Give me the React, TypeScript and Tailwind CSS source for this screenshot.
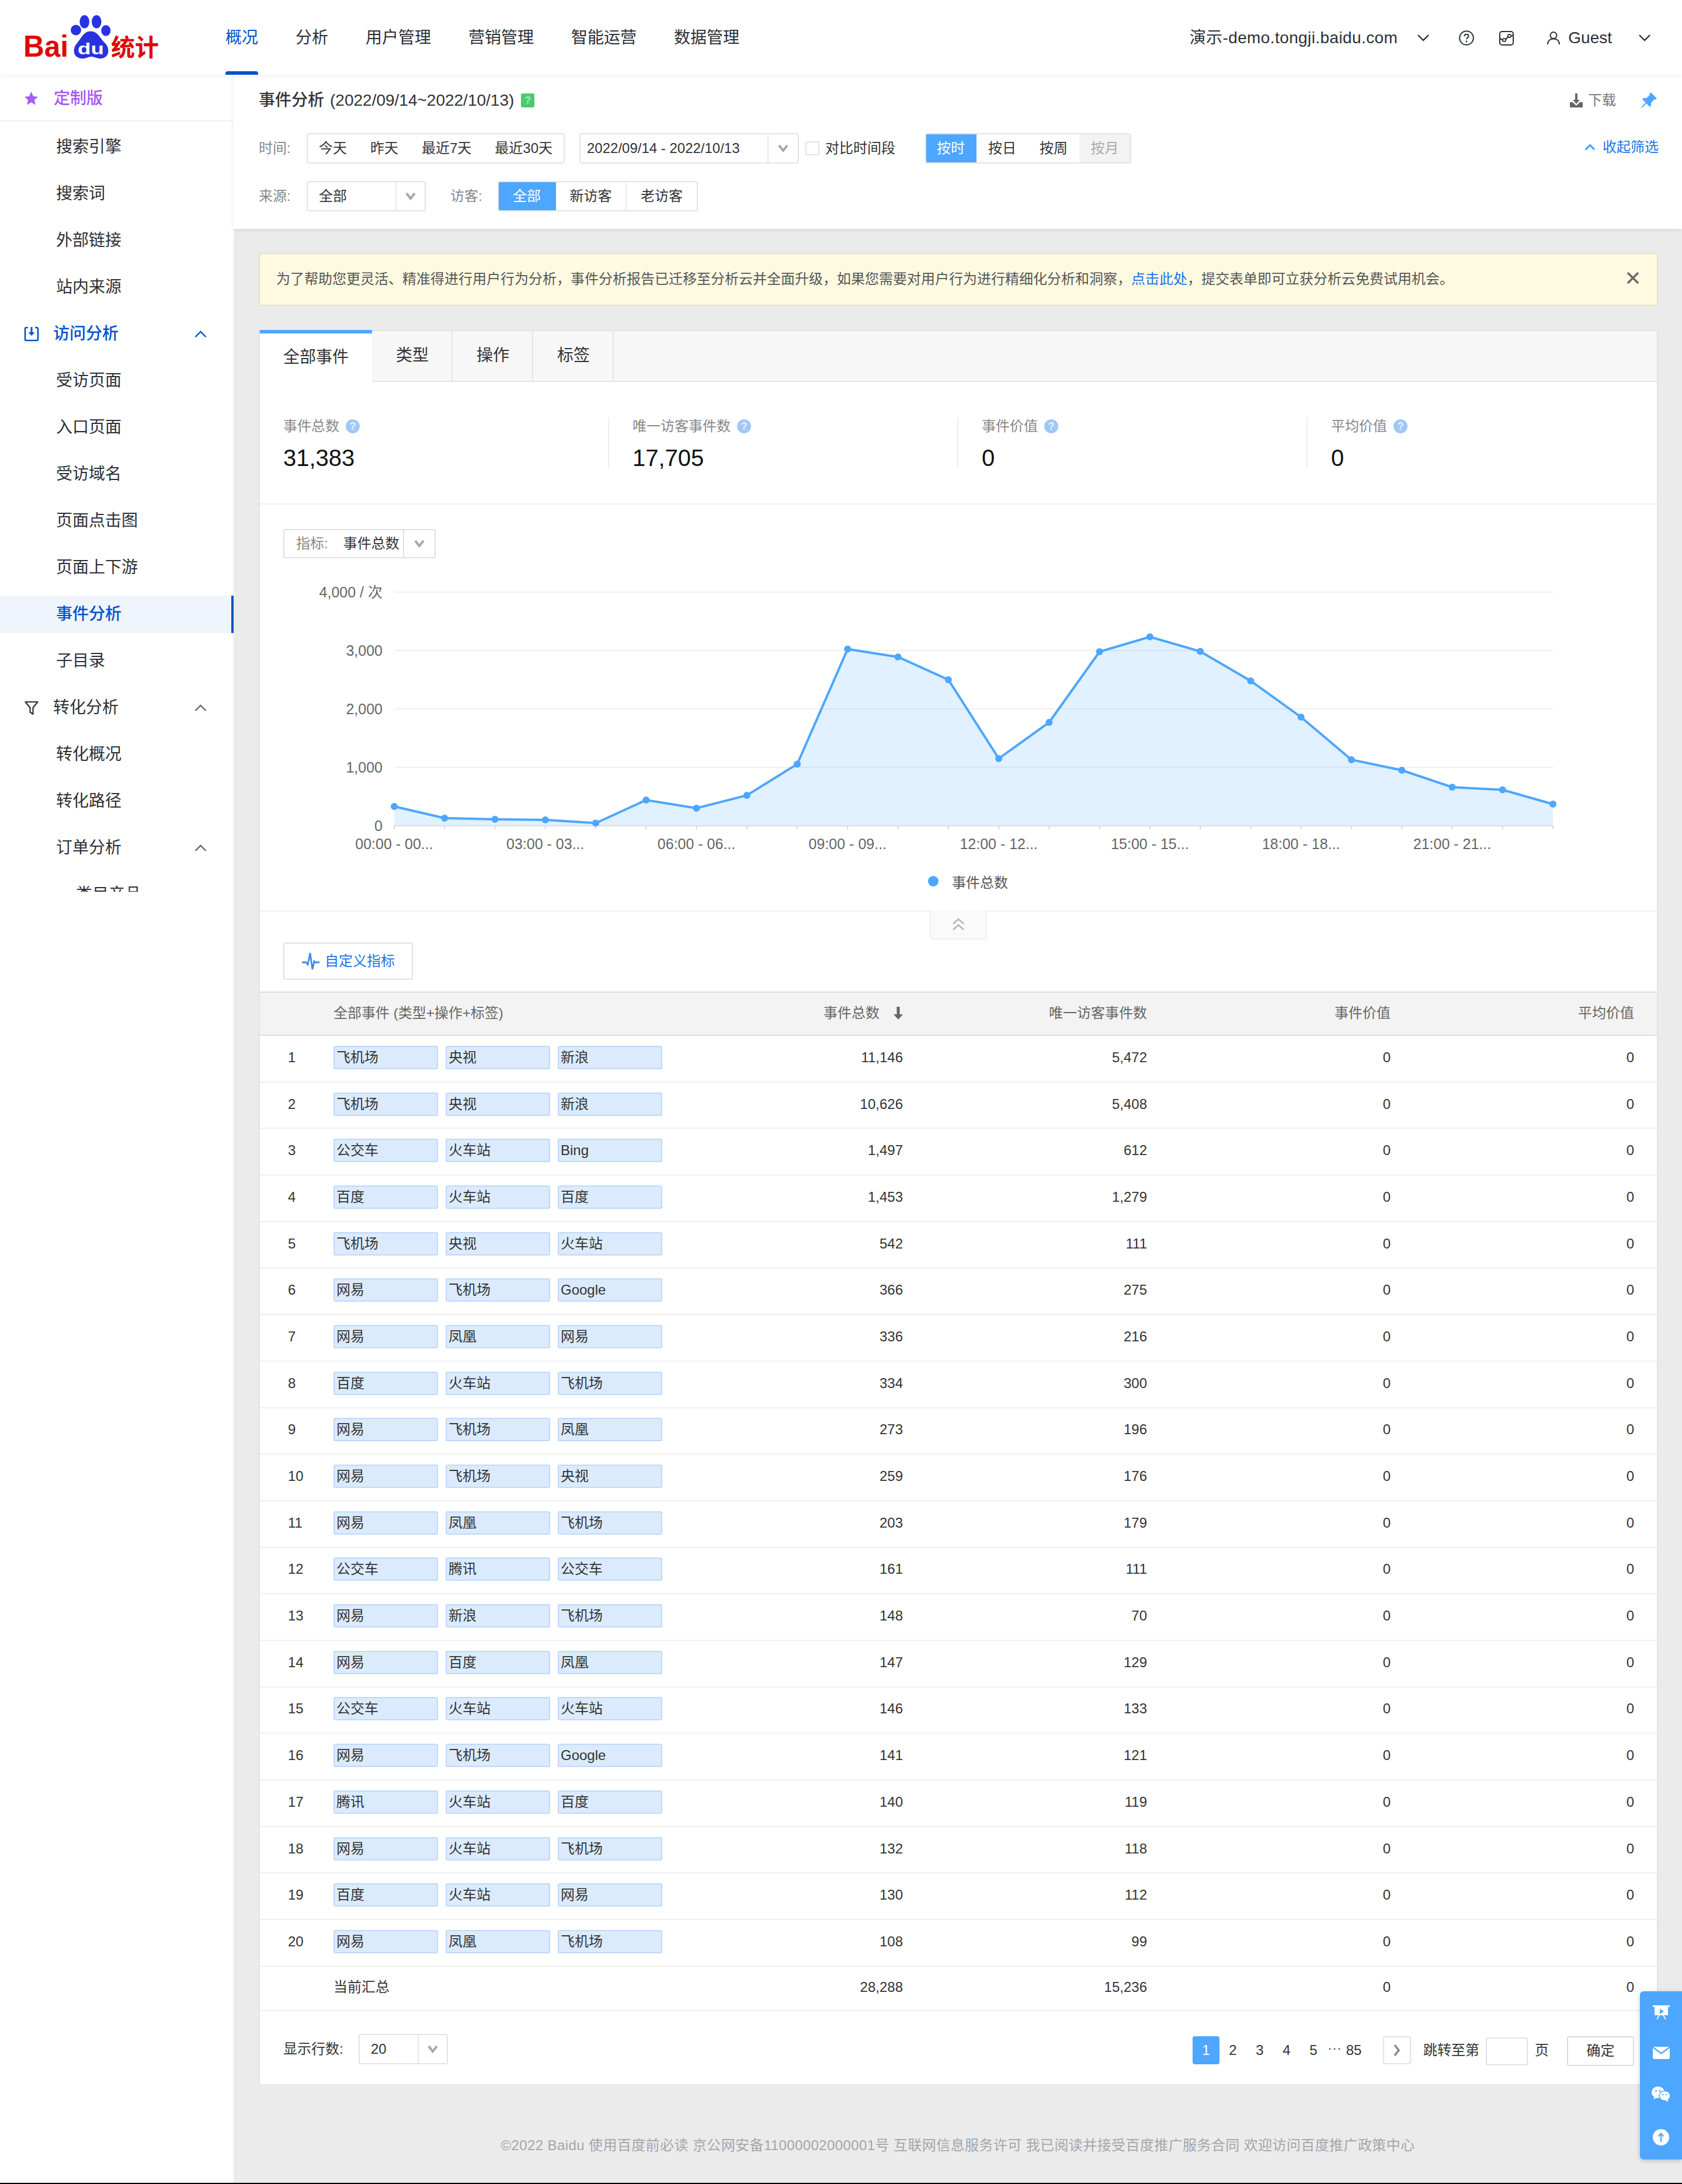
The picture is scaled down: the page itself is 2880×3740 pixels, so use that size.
import { BsPinAngleFill } from 'react-icons/bs'

const navItems = ['分析', '用户管理', '营销管理', '智能运营', '数据管理']

const rows: [string, string, string, string, string][] = [
  ['飞机场', '央视', '新浪', '11,146', '5,472'],
  ['飞机场', '央视', '新浪', '10,626', '5,408'],
  ['公交车', '火车站', 'Bing', '1,497', '612'],
  ['百度', '火车站', '百度', '1,453', '1,279'],
  ['飞机场', '央视', '火车站', '542', '111'],
  ['网易', '飞机场', 'Google', '366', '275'],
  ['网易', '凤凰', '网易', '336', '216'],
  ['百度', '火车站', '飞机场', '334', '300'],
  ['网易', '飞机场', '凤凰', '273', '196'],
  ['网易', '飞机场', '央视', '259', '176'],
  ['网易', '凤凰', '飞机场', '203', '179'],
  ['公交车', '腾讯', '公交车', '161', '111'],
  ['网易', '新浪', '飞机场', '148', '70'],
  ['网易', '百度', '凤凰', '147', '129'],
  ['公交车', '火车站', '火车站', '146', '133'],
  ['网易', '飞机场', 'Google', '141', '121'],
  ['腾讯', '火车站', '百度', '140', '119'],
  ['网易', '火车站', '飞机场', '132', '118'],
  ['百度', '火车站', '网易', '130', '112'],
  ['网易', '凤凰', '飞机场', '108', '99'],
]

const chartY = [
  1382, 1402, 1404, 1405, 1410.5, 1371, 1385, 1363, 1309.5, 1112.5, 1126, 1165, 1300, 1238, 1117, 1091.5, 1116.5, 1167,
  1229, 1302, 1320, 1349, 1353.5, 1378,
]
const chartX = chartY.map((_, i) => 675 + i * 86.26)
const linePoints = chartY.map((y, i) => `${chartX[i]},${y}`).join(' ')
const axisLabels = ['00:00 - 00...', '03:00 - 03...', '06:00 - 06...', '09:00 - 09...', '12:00 - 12...', '15:00 - 15...', '18:00 - 18...', '21:00 - 21...']

function Caret() {
  return (
    <svg width="20" height="14" viewBox="0 0 20 14" fill="none">
      <path d="M3 2l7 9 7-9" stroke="#a8a8a8" strokeWidth="4" />
    </svg>
  )
}

function ThinChevron({ up, color = '#2b2f36', size = 20, weight = 2.4 }: { up?: boolean; color?: string; size?: number; weight?: number }) {
  return (
    <svg width={size} height="12" viewBox="0 0 20 12" fill="none">
      <path d={up ? 'M1 11l9-9 9 9' : 'M1 1l9 9 9-9'} stroke={color} strokeWidth={weight} />
    </svg>
  )
}

function HelpDot() {
  return (
    <span className="ml-[11px] flex h-[24px] w-[24px] items-center justify-center rounded-full bg-[#a0c8f6] text-[18px] font-bold leading-none text-[#e8f2fd]">
      ?
    </span>
  )
}

function Logo() {
  return (
    <svg width="280" height="100" viewBox="0 0 280 100" className="ml-[20px] mt-[-1px] shrink-0">
      <g fill="#2932e1">
        <ellipse cx="110" cy="37.5" rx="9" ry="9" />
        <ellipse cx="124.7" cy="23.3" rx="8.3" ry="11.3" />
        <ellipse cx="145.3" cy="23.3" rx="8.3" ry="11.3" />
        <ellipse cx="161.3" cy="38.3" rx="8" ry="9.3" />
        <path d="M135 39.5C123 39.5 118 53 112 60C105 67 103 83 118 86C127 87.500 130 83 136 83C142 83 148 87.500 155 86C168 83 168 68 160 60C152 53 148 39.5 135 39.5Z" />
      </g>
      <text x="113" y="79" fontSize="28" fontWeight="700" fill="#ffffff" textLength="45" lengthAdjust="spacingAndGlyphs">
        du
      </text>
      <text x="20" y="83" fontSize="52" fontWeight="700" fill="#e10601" textLength="77" lengthAdjust="spacingAndGlyphs">
        Bai
      </text>
      <text x="170" y="82" fontSize="41" fontWeight="700" fill="#e10601">
        统计
      </text>
    </svg>
  )
}

function TopBar() {
  return (
    <header className="relative z-10 flex h-[128px] shrink-0 items-center bg-white text-[28px] text-[#2b2f36] shadow-[0_2px_10px_rgba(0,0,0,0.06)]">
      <Logo />
      <nav className="ml-[86px] flex h-full items-center gap-[64px] pt-[2px]">
        <span className="relative flex h-full items-center text-[#0052cc]">
          概况
          <span className="absolute bottom-0 left-0 h-[6px] w-full rounded-t-[4px] bg-[#0052cc]" />
        </span>
        {navItems.map((n) => (
          <span key={n}>{n}</span>
        ))}
      </nav>
      <div className="ml-auto mr-[54px] mt-[2px] flex items-center">
        <span className="tracking-[0.4px]">演示-demo.tongji.baidu.com</span>
        <span className="ml-[34px]">
          <ThinChevron />
        </span>
        <svg width="26" height="26" viewBox="0 0 26 26" fill="none" className="ml-[51px]">
          <circle cx="13" cy="13" r="11.8" stroke="#2b2f36" strokeWidth="2" />
          <path d="M9.500 10.200c0-2 1.600-3.400 3.600-3.400s3.500 1.300 3.500 3.200c0 2.600-3.600 2.600-3.600 5.200" stroke="#2b2f36" strokeWidth="2" />
          <circle cx="13" cy="19" r="1.400" fill="#2b2f36" />
        </svg>
        <svg width="25" height="25" viewBox="0 0 25 25" fill="none" className="ml-[43px]">
          <rect x="1" y="1" width="23" height="23" rx="4" stroke="#2b2f36" strokeWidth="2" />
          <path d="M1 13l5 2.500M11 15l5-6M21 9l3-2" stroke="#2b2f36" strokeWidth="2" />
          <circle cx="8.500" cy="15.500" r="2.700" stroke="#2b2f36" strokeWidth="1.800" />
          <circle cx="17.500" cy="8.500" r="2.700" stroke="#2b2f36" strokeWidth="1.800" />
        </svg>
        <svg width="22" height="22" viewBox="0 0 22 22" fill="none" className="ml-[57px]">
          <circle cx="11" cy="6.500" r="5.500" stroke="#2b2f36" strokeWidth="2" />
          <path d="M1 22c0-6 4-9.500 10-9.500s10 3.500 10 9.500" stroke="#2b2f36" strokeWidth="2" />
        </svg>
        <span className="ml-[14px]">Guest</span>
        <span className="ml-[46px]">
          <ThinChevron />
        </span>
      </div>
    </header>
  )
}

function SideItem({ label, active }: { label: string; active?: boolean }) {
  return (
    <div className="h-[80px] py-[8px]">
      <div
        className={`flex h-[64px] items-center pl-[96px] ${
          active ? 'border-r-4 border-[#0052cc] bg-[#f0f5fd] font-medium text-[#0052cc]' : 'text-[#2b2f36]'
        }`}
      >
        {label}
      </div>
    </div>
  )
}

function SideGroup({ label, icon, blue, indent }: { label: string; icon?: React.ReactNode; blue?: boolean; indent?: boolean }) {
  return (
    <div className={`flex h-[80px] items-center pr-[46px] ${blue ? 'font-medium text-[#0052cc]' : 'text-[#2b2f36]'}`}>
      {indent ? <span className="pl-[96px]">{label}</span> : null}
      {icon ? <span className="ml-[41px] flex w-[26px] justify-center">{icon}</span> : null}
      {icon ? <span className="ml-[24px]">{label}</span> : null}
      <span className="ml-auto">
        <ThinChevron up color={blue ? '#0052cc' : '#5f6570'} size={21} />
      </span>
    </div>
  )
}

function Sidebar() {
  return (
    <aside className="w-[400px] shrink-0 bg-white text-[28px]">
      <div className="flex h-[80px] items-center border-b-2 border-[#f0f0f0] pl-[41px] pt-[3px] text-[#a855f7]">
        <svg width="25" height="25" viewBox="0 0 24 24" fill="#a55ffb">
          <path d="M12 1l3.300 7.400 7.700.9-5.700 5.400 1.600 8L12 18.500 5.100 22.700l1.600-8L1 9.300l7.700-.9z" />
        </svg>
        <span className="ml-[26px] font-medium">定制版</span>
      </div>
      <div className="h-[1319px] overflow-hidden pt-[4px]">
        <SideItem label="搜索引擎" />
        <SideItem label="搜索词" />
        <SideItem label="外部链接" />
        <SideItem label="站内来源" />
        <SideGroup
          label="访问分析"
          blue
          icon={
            <svg width="26" height="26" viewBox="0 0 26 26" fill="none">
              <path d="M7 2H4a2 2 0 0 0-2 2v18a2 2 0 0 0 2 2h18a2 2 0 0 0 2-2V4a2 2 0 0 0-2-2h-3" stroke="#0052cc" strokeWidth="2.600" />
              <path d="M13 1v12" stroke="#0052cc" strokeWidth="3" />
              <path d="M7.500 10h11L13 16z" fill="#0052cc" />
            </svg>
          }
        />
        <SideItem label="受访页面" />
        <SideItem label="入口页面" />
        <SideItem label="受访域名" />
        <SideItem label="页面点击图" />
        <SideItem label="页面上下游" />
        <SideItem label="事件分析" active />
        <SideItem label="子目录" />
        <SideGroup
          label="转化分析"
          icon={
            <svg width="24" height="25" viewBox="0 0 24 25" fill="none">
              <path d="M1.500 2h21l-8 10v11l-5-3.500V12z" stroke="#2b2f36" strokeWidth="2.200" strokeLinejoin="round" />
            </svg>
          }
        />
        <SideItem label="转化概况" />
        <SideItem label="转化路径" />
        <SideGroup label="订单分析" indent />
        <div className="flex h-[80px] items-center pl-[130px] text-[#2b2f36]">类目产品</div>
      </div>
    </aside>
  )
}

function FilterHeader() {
  return (
    <section className="relative z-[5] h-[264px] shrink-0 bg-white pl-[43px] pr-[40px] pt-[18px] text-[24px] text-[#333333] shadow-[0_2px_8px_rgba(0,0,0,0.08)]">
      <div className="flex h-[52px] items-center">
        <span className="text-[28px] font-medium">事件分析</span>
        <span className="ml-[10px] text-[28px]">(2022/09/14~2022/10/13)</span>
        <span className="ml-[12px] flex h-[24px] w-[23px] items-center justify-center rounded-[3px] bg-[#4cc872] text-[18px] font-bold leading-none text-[#a5e8bb]">
          ?
        </span>
        <span className="ml-auto flex items-center text-[#777777]">
          <svg width="22" height="24" viewBox="0 0 22 24" fill="#666666">
            <path d="M9 0h4v11h4l-6 7-6-7h4z" />
            <path d="M0 15h5l6 6 6-6h5v9H0z" />
          </svg>
          <span className="ml-[9px]">下载</span>
          <span className="ml-[41px] mr-[2px]">
            <BsPinAngleFill size={30} color="#4da6ff" />
          </span>
        </span>
      </div>
      <div className="mt-[30px] flex h-[52px] items-center">
        <span className="w-[82px] text-[#888888]">时间:</span>
        <div className="flex h-[52px] w-[442px] items-center gap-[40px] rounded-[4px] border-2 border-[#e3e3e3] px-[19px]">
          <span>今天</span>
          <span>昨天</span>
          <span>最近7天</span>
          <span>最近30天</span>
        </div>
        <div className="ml-[25px] flex h-[52px] w-[376px] items-center rounded-[4px] border-2 border-[#e3e3e3] pl-[11px]">
          <span className="flex-1">2022/09/14 - 2022/10/13</span>
          <span className="flex h-full w-[52px] items-center justify-center border-l-2 border-[#e9e9e9]">
            <Caret />
          </span>
        </div>
        <span className="ml-[11px] h-[24px] w-[24px] rounded-[3px] border-2 border-[#e3e3e3]" />
        <span className="ml-[10px]">对比时间段</span>
        <div className="ml-[51px] flex h-[52px] overflow-hidden rounded-[4px] border-2 border-[#e3e3e3]">
          <span className="m-[-2px] mr-0 flex h-[52px] w-[88px] items-center justify-center bg-[#4da6ff] text-white">按时</span>
          <span className="flex w-[88px] items-center justify-center">按日</span>
          <span className="flex w-[88px] items-center justify-center">按周</span>
          <span className="flex w-[87px] items-center justify-center bg-[#f3f3f3] text-[#aaaaaa]">按月</span>
        </div>
        <span className="mb-[4px] ml-auto flex items-center text-[#1a73e8]">
          <ThinChevron up color="#4da6ff" size={17} weight={4} />
          <span className="ml-[13px]">收起筛选</span>
        </span>
      </div>
      <div className="mt-[30px] flex h-[52px] items-center">
        <span className="w-[82px] text-[#888888]">来源:</span>
        <div className="flex h-[52px] w-[204px] items-center rounded-[4px] border-2 border-[#e3e3e3] pl-[19px]">
          <span className="flex-1">全部</span>
          <span className="flex h-full w-[50px] items-center justify-center border-l-2 border-[#e9e9e9]">
            <Caret />
          </span>
        </div>
        <span className="ml-[42px] w-[81px] text-[#888888]">访客:</span>
        <div className="flex h-[52px] overflow-hidden rounded-[4px] border-2 border-[#e3e3e3]">
          <span className="m-[-2px] mr-0 flex h-[52px] w-[100px] items-center justify-center bg-[#4da6ff] text-white">全部</span>
          <span className="flex w-[121px] items-center justify-center border-r-2 border-[#e9e9e9]">新访客</span>
          <span className="flex w-[120px] items-center justify-center">老访客</span>
        </div>
      </div>
    </section>
  )
}

function Tabs() {
  return (
    <div className="flex h-[89px] bg-[#f7f7f7] text-[28px] text-[#333333]">
      <div className="flex w-[192px] items-center border-t-[6px] border-[#4da6ff] bg-white pb-[2px] pl-[40px]">全部事件</div>
      {['类型', '操作', '标签'].map((t) => (
        <div key={t} className="flex w-[138px] items-center justify-center border-b-2 border-r-2 border-t-2 border-[#e4e4e4] pb-[2px] pl-[2px]">
          {t}
        </div>
      ))}
      <div className="flex-1 border-b-2 border-t-2 border-[#e4e4e4]" />
    </div>
  )
}

function Stats() {
  const items = [
    { label: '唯一访客事件数', value: '17,705' },
    { label: '事件价值', value: '0' },
    { label: '平均价值', value: '0' },
  ]
  return (
    <div className="flex h-[210px] border-b-2 border-[#f0f0f0] pt-[61px]">
      <div className="h-[87px] w-[596px] pl-[40px]">
        <div className="mt-[3px] flex items-center text-[24px] leading-[24px] text-[#888888]">
          事件总数
          <HelpDot />
        </div>
        <div className="mt-[18px] text-[40px] leading-[48px] text-[#111111]">31,383</div>
      </div>
      {items.map((s) => (
        <div key={s.label} className="h-[87px] w-[598px] border-l-2 border-[#eeeeee] pl-[40px]">
          <div className="pt-[3px]">
            <div className="flex items-center text-[24px] leading-[24px] text-[#888888]">
              {s.label}
              <HelpDot />
            </div>
          </div>
          <div className="mt-[18px] text-[40px] leading-[48px] text-[#111111]">{s.value}</div>
        </div>
      ))}
    </div>
  )
}

function Chart() {
  const ticks = [
    ['4,000 / 次', 1015],
    ['3,000', 1115],
    ['2,000', 1215],
    ['1,000', 1315],
    ['0', 1415],
  ] as const
  return (
    <svg width="2392" height="603" viewBox="445 957 2392 603" className="block">
      {ticks.slice(0, 4).map(([, y]) => (
        <line key={y} x1="675" x2="2659" y1={y} y2={y} stroke="#f0f0f0" strokeWidth="2" />
      ))}
      {ticks.map(([t, y]) => (
        <text key={y} x="655" y={y} fontSize="25" fill="#666666" textAnchor="end" dominantBaseline="central">
          {t}
        </text>
      ))}
      <polygon points={`675,1415 ${linePoints} ${chartX[23]},1415`} fill="#4da6ff" fillOpacity="0.16" />
      <line x1="675" x2="2659" y1="1415" y2="1415" stroke="#dddddd" strokeWidth="2" />
      {chartX.map((x) => (
        <line key={x} x1={x} x2={x} y1="1415" y2="1421" stroke="#cccccc" strokeWidth="1.500" />
      ))}
      <polyline points={linePoints} fill="none" stroke="#4da6ff" strokeWidth="4" />
      {chartX.map((x, i) => (
        <circle key={x} cx={x} cy={chartY[i]} r="6" fill="#4da6ff" />
      ))}
      {axisLabels.map((t, i) => (
        <text key={t} x={chartX[i * 3]} y="1446" fontSize="25" fill="#666666" textAnchor="middle" dominantBaseline="central">
          {t}
        </text>
      ))}
      <circle cx="1598" cy="1510" r="9" fill="#4da6ff" />
      <text x="1630" y="1512" fontSize="24" fill="#555555" dominantBaseline="central">
        事件总数
      </text>
    </svg>
  )
}

function ChartSection() {
  return (
    <div className="relative border-b-2 border-[#f0f0f0] pt-[42px]">
      <div className="ml-[40px] flex h-[50px] w-[261px] items-center rounded-[3px] border-2 border-[#e0e0e0] text-[24px]">
        <span className="ml-[20px] text-[#888888]">指标:</span>
        <span className="ml-[26px] w-[102px] text-[#333333]">事件总数</span>
        <span className="flex h-full flex-1 items-center justify-center border-l-2 border-[#e0e0e0]">
          <Caret />
        </span>
      </div>
      <Chart />
      <div className="absolute left-[1147px] top-full flex h-[50px] w-[98px] items-center justify-center rounded-b-[4px] border-2 border-t-0 border-[#f0f0f0] bg-[#fafafa]">
        <svg width="22" height="24" viewBox="0 0 22 24" fill="none">
          <path d="M2 11l9-8 9 8M2 21l9-8 9 8" stroke="#b5b5b5" strokeWidth="2.500" />
        </svg>
      </div>
    </div>
  )
}

const gridCols = 'grid grid-cols-[126px_629px_346px_418px_417px_417px]'

function Tag({ text }: { text: string }) {
  return (
    <span className="h-[40px] w-[179px] rounded-[3px] border-2 border-[#bedafb] bg-[#dbebfd] pl-[3px] leading-[36px] text-[#333333]">
      {text}
    </span>
  )
}

function EventTable() {
  return (
    <div className="text-[24px] text-[#333333]">
      <div className={`${gridCols} mt-[20px] h-[76px] items-center border-y-2 border-[#dedede] bg-[#f3f3f3] pb-[2px] text-[#666666]`}>
        <span />
        <span>全部事件 (类型+操作+标签)</span>
        <span className="flex items-center justify-end">
          事件总数
          <svg width="16" height="22" viewBox="0 0 16 22" fill="#666666" className="ml-[24px]">
            <path d="M5.500 0h5v13H16l-8 9-8-9h5.500z" />
          </svg>
        </span>
        <span className="text-right">唯一访客事件数</span>
        <span className="text-right">事件价值</span>
        <span className="text-right">平均价值</span>
      </div>
      {rows.map((r, i) => (
        <div key={i} className={`${gridCols} h-[79.7px] items-center border-b-2 border-[#f0f0f0] pb-[4px]`}>
          <span className="pl-[48px]">{i + 1}</span>
          <span className="flex gap-[13px]">
            <Tag text={r[0]} />
            <Tag text={r[1]} />
            <Tag text={r[2]} />
          </span>
          <span className="text-right">{r[3]}</span>
          <span className="text-right">{r[4]}</span>
          <span className="text-right">0</span>
          <span className="text-right">0</span>
        </div>
      ))}
      <div className={`${gridCols} h-[76px] items-center border-b-2 border-[#f0f0f0] pb-[4px]`}>
        <span />
        <span>当前汇总</span>
        <span className="text-right">28,288</span>
        <span className="text-right">15,236</span>
        <span className="text-right">0</span>
        <span className="text-right">0</span>
      </div>
    </div>
  )
}

function Pager() {
  return (
    <div className="flex h-[125px] items-start pl-[40px] pr-[39px] text-[24px] text-[#333333]">
      <span className="mt-[39px] flex h-[52px] w-[129px] items-center">显示行数:</span>
      <div className="mt-[39px] flex h-[52px] w-[153px] items-center rounded-[4px] border-2 border-[#e3e3e3] pl-[19px]">
        <span className="flex-1">20</span>
        <span className="flex h-full w-[50px] items-center justify-center border-l-2 border-[#e9e9e9]">
          <Caret />
        </span>
      </div>
      <div className="ml-auto mt-[43px] flex items-start">
        <span className="flex h-[48px] w-[46px] items-center justify-center rounded-[4px] bg-[#4da6ff] font-medium text-white">1</span>
        {['2', '3', '4', '5'].map((p) => (
          <span key={p} className="flex h-[48px] w-[46px] items-center justify-center">
            {p}
          </span>
        ))}
        <span className="flex h-[40px] w-[26px] items-center justify-center text-[#555555]">···</span>
        <span className="ml-[4px] flex h-[48px] w-[32px] items-center justify-center">85</span>
        <span className="ml-[34px] flex h-[48px] w-[48px] items-center justify-center rounded-[4px] border-2 border-[#e3e3e3]">
          <svg width="14" height="24" viewBox="0 0 14 24" fill="none">
            <path d="M3 3l7 9-7 9" stroke="#888888" strokeWidth="3.500" />
          </svg>
        </span>
        <span className="ml-[21px] flex h-[48px] items-center">跳转至第</span>
        <span className="ml-[11px] mt-[2px] h-[48px] w-[72px] rounded-[4px] border-2 border-[#e3e3e3]" />
        <span className="ml-[12px] flex h-[48px] items-center">页</span>
        <span className="ml-[31px] flex h-[51px] w-[115px] items-center justify-center rounded-[4px] border-2 border-[#dcdcdc]">确定</span>
      </div>
    </div>
  )
}

function Panel() {
  return (
    <section className="ml-[43px] mr-[41px] mt-[41px] border-x-2 border-[#e2e2e2] bg-white">
      <Tabs />
      <Stats />
      <ChartSection />
      <div className="pl-[40px] pt-[53px]">
        <button className="flex h-[64px] w-[222px] items-center justify-center rounded-[3px] border-2 border-[#e0e0e0] text-[24px] text-[#1a73e8]">
          <svg width="32" height="30" viewBox="0 0 32 30" fill="none" className="mr-[8px]">
            <path d="M1 17h7l3 4 4-20 4 28 3-14 2 2h7" stroke="#3f8ae8" strokeWidth="2.800" />
          </svg>
          自定义指标
        </button>
      </div>
      <EventTable />
      <Pager />
    </section>
  )
}

function FloatTools() {
  return (
    <div className="absolute right-0 top-[3410px] z-20 flex h-[288px] w-[72px] flex-col items-center justify-around rounded-l-[6px] bg-[#4da6ff] shadow-[0_2px_8px_rgba(0,0,0,0.2)]">
      <svg width="29" height="24" viewBox="0 0 29 24" fill="#ffffff">
        <rect x="0" y="0" width="29" height="3" />
        <path d="M3 3h23v14H3z" />
        <path d="M6 24l4-7h2l-4 7zM23 24l-4-7h-2l4 7z" />
        <path d="M12 6l7 4.500-7 4.500z" fill="#4da6ff" />
      </svg>
      <svg width="29" height="21" viewBox="0 0 29 21" fill="#ffffff">
        <path d="M1 0h27l-13.500 10z" />
        <path d="M0 2l14.500 11L29 2v17a2 2 0 0 1-2 2H2a2 2 0 0 1-2-2z" />
      </svg>
      <svg width="32" height="26" viewBox="0 0 32 26" fill="#ffffff">
        <ellipse cx="11" cy="10" rx="11" ry="10" />
        <path d="M5 17l-2 5 7-3z" />
        <ellipse cx="22.500" cy="16" rx="9.500" ry="8.500" stroke="#4da6ff" strokeWidth="1.500" />
        <path d="M27 22l2 4-6-2z" />
        <circle cx="7.500" cy="7.500" r="1.500" fill="#4da6ff" />
        <circle cx="14" cy="7.500" r="1.500" fill="#4da6ff" />
        <circle cx="19.500" cy="14" r="1.300" fill="#4da6ff" />
        <circle cx="25.500" cy="14" r="1.300" fill="#4da6ff" />
      </svg>
      <svg width="28" height="28" viewBox="0 0 28 28" fill="none">
        <circle cx="14" cy="14" r="14" fill="#ffffff" />
        <path d="M14 22V8M9.500 12.500L14 7.500l4.500 5" stroke="#4da6ff" strokeWidth="2.200" />
      </svg>
    </div>
  )
}

export default function App() {
  return (
    <div className="relative flex h-[3740px] w-[2880px] flex-col overflow-hidden bg-[#ebebeb] font-['Liberation_Sans','Noto_Sans_CJK_SC',sans-serif]">
      <TopBar />
      <div className="flex min-h-0 flex-1">
        <Sidebar />
        <main className="min-w-0 flex-1">
          <FilterHeader />
          <div className="ml-[43px] mr-[41px] mt-[41px] flex h-[91px] items-center rounded-[3px] border-2 border-[#e5e1c8] bg-[#fefae1] pb-[2px] pl-[28px] pr-[30px] text-[24px] text-[#555555]">
            <span>
              为了帮助您更灵活、精准得进行用户行为分析，事件分析报告已迁移至分析云并全面升级，如果您需要对用户行为进行精细化分析和洞察，
              <span className="text-[#1a73e8]">点击此处</span>，提交表单即可立获分析云免费试用机会。
            </span>
            <svg width="22" height="22" viewBox="0 0 22 22" fill="none" className="mb-[4px] ml-auto">
              <path d="M2 2l18 18M20 2L2 20" stroke="#666666" strokeWidth="3.500" />
            </svg>
          </div>
          <Panel />
          <footer className="pt-[90px] text-center text-[24px] leading-[30px] tracking-[0.4px] text-[#a3a6ad]">
            ©2022 Baidu 使用百度前必读 京公网安备11000002000001号 互联网信息服务许可 我已阅读并接受百度推广服务合同 欢迎访问百度推广政策中心
          </footer>
        </main>
      </div>
      <div className="h-[2px] shrink-0 bg-black" />
      <FloatTools />
    </div>
  )
}
